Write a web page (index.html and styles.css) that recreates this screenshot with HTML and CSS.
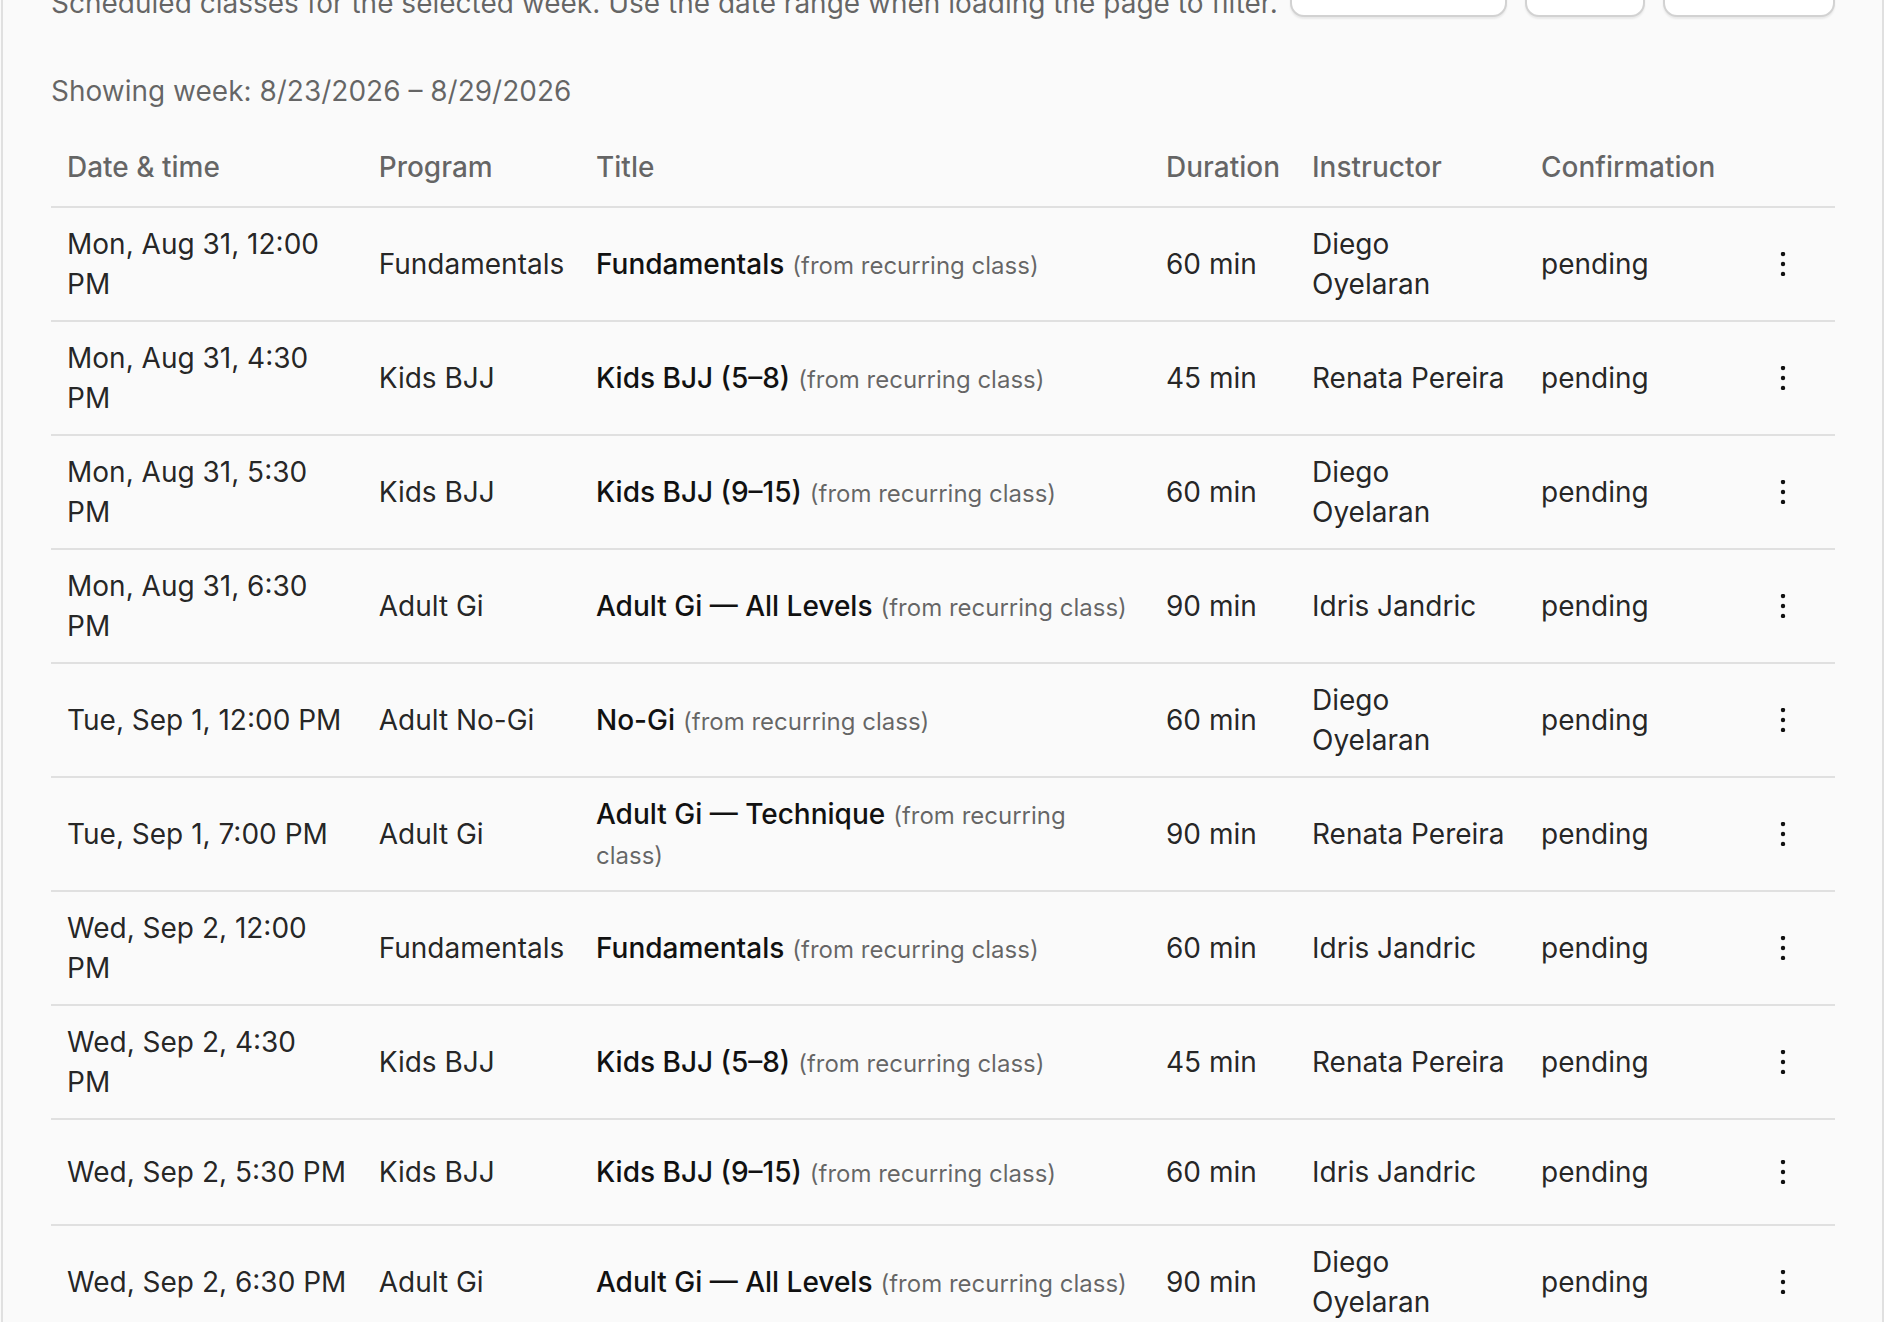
FILE: index.html
```html
<!DOCTYPE html>
<html>
<head>
<meta charset="utf-8">
<title>Schedule</title>
<link rel="stylesheet" href="styles.css">
</head>
<body>
<div class="card">
	<div class="toolbar">
		<div class="subtitle">Scheduled classes for the selected week. Use the date range when loading the page to filter.</div>
		<div class="btn_group">
			<button class="btn btn_prev">Previous week</button>
			<button class="btn btn_today">Today</button>
			<button class="btn btn_next">Next week</button>
		</div>
	</div>
	<div class="week_label">Showing week: 8/23/2026 – 8/29/2026</div>

	<table class="sched">
		<colgroup>
			<col class="c_date"><col class="c_prog"><col class="c_title"><col class="c_dur"><col class="c_inst"><col class="c_conf"><col class="c_act">
		</colgroup>
		<thead>
			<tr>
				<th>Date &amp; time</th>
				<th>Program</th>
				<th>Title</th>
				<th>Duration</th>
				<th>Instructor</th>
				<th>Confirmation</th>
				<th></th>
			</tr>
		</thead>
		<tbody id="rows"></tbody>
	</table>
</div>

<script>
var classes = [
	["Mon, Aug 31, 12:00 PM", "Fundamentals", "Fundamentals", "60 min", "Diego Oyelaran"],
	["Mon, Aug 31, 4:30 PM", "Kids BJJ", "Kids BJJ (5–8)", "45 min", "Renata Pereira"],
	["Mon, Aug 31, 5:30 PM", "Kids BJJ", "Kids BJJ (9–15)", "60 min", "Diego Oyelaran"],
	["Mon, Aug 31, 6:30 PM", "Adult Gi", "Adult Gi — All Levels", "90 min", "Idris Jandric"],
	["Tue, Sep 1, 12:00 PM", "Adult No-Gi", "No-Gi", "60 min", "Diego Oyelaran"],
	["Tue, Sep 1, 7:00 PM", "Adult Gi", "Adult Gi — Technique", "90 min", "Renata Pereira"],
	["Wed, Sep 2, 12:00 PM", "Fundamentals", "Fundamentals", "60 min", "Idris Jandric"],
	["Wed, Sep 2, 4:30 PM", "Kids BJJ", "Kids BJJ (5–8)", "45 min", "Renata Pereira"],
	["Wed, Sep 2, 5:30 PM", "Kids BJJ", "Kids BJJ (9–15)", "60 min", "Idris Jandric"],
	["Wed, Sep 2, 6:30 PM", "Adult Gi", "Adult Gi — All Levels", "90 min", "Diego Oyelaran"],
	["Thu, Sep 3, 12:00 PM", "Adult No-Gi", "No-Gi", "60 min", "Renata Pereira"]
];

var kebab = '<button class="more_btn" title="More"><svg width="24" height="24" viewBox="0 0 24 24">' +
	'<circle cx="12" cy="2" r="2.2"/><circle cx="12" cy="12" r="2.2"/><circle cx="12" cy="22" r="2.2"/></svg></button>';

var tbody = document.getElementById("rows");
var html = "";
for (var i = 0; i < classes.length; i++) {
	var c = classes[i];
	html += "<tr>" +
		"<td>" + c[0] + "</td>" +
		"<td>" + c[1] + "</td>" +
		"<td><span class=\"cls_title\">" + c[2] + "</span><span class=\"cls_src\">(from recurring class)</span></td>" +
		"<td>" + c[3] + "</td>" +
		"<td>" + c[4] + "</td>" +
		"<td>pending</td>" +
		"<td class=\"act\">" + kebab + "</td>" +
		"</tr>";
}
tbody.innerHTML = html;
</script>
</body>
</html>
```
FILE: styles.css
```css
* { box-sizing: border-box; }
html, body { margin: 0; padding: 0; background: #fafafa; }
body { font-family: Inter, "Noto Sans", sans-serif; font-size: 28px; line-height: 40px; color: rgba(0, 0, 0, 0.87); overflow: hidden; }

.card {
	margin: -81px 0 0 1px;
	padding: 24px 47px 48px 48px;
	border: 2px solid #e0e0e0;
	border-radius: 8px;
	background: #fafafa;
}

.toolbar { display: flex; align-items: flex-end; justify-content: space-between; }
.subtitle { color: rgba(0, 0, 0, 0.6); white-space: nowrap; }
.btn_group { display: flex; gap: 18px; margin-bottom: 6px; }
.btn {
	height: 72px;
	padding: 0 8px;
	border: 2px solid #d2d2d2;
	border-radius: 14px;
	background: #fff;
	box-shadow: 0 2px 2px rgba(0, 0, 0, 0.07);
	font-family: inherit;
	font-size: 28px;
	line-height: 40px;
	white-space: nowrap;
	overflow: hidden;
	color: rgba(0, 0, 0, 0.87);
}
.btn_prev { width: 217px; }
.btn_today { width: 120px; }
.btn_next { width: 172px; }

.week_label { margin-top: 48px; color: rgba(0, 0, 0, 0.6); }

.sched { width: 100%; margin-top: 23px; border-collapse: collapse; table-layout: fixed; }
.c_date { width: 311.7px; }
.c_prog { width: 217.3px; }
.c_title { width: 570px; }
.c_dur { width: 146px; }
.c_inst { width: 229px; }
.c_conf { width: 206px; }
.c_act { width: 104px; }

.sched th {
	padding: 13px 16px 19px;
	text-align: left;
	font-weight: 500;
	color: rgba(0, 0, 0, 0.6);
	border-bottom: 2px solid #e0e0e0;
	white-space: nowrap;
}
.sched td {
	padding: 16px;
	vertical-align: middle;
	border-bottom: 2px solid #e0e0e0;
}

.cls_title { font-weight: 500; color: #111; }
.cls_src { margin-left: 8px; font-size: 24px; line-height: 1; color: rgba(0, 0, 0, 0.6); }

.sched td.act { text-align: right; }
.more_btn {
	display: inline-flex;
	align-items: center;
	justify-content: center;
	width: 72px;
	height: 72px;
	padding: 0;
	border: 0;
	border-radius: 50%;
	background: transparent;
	vertical-align: middle;
}
.more_btn svg { fill: #111; }
```
